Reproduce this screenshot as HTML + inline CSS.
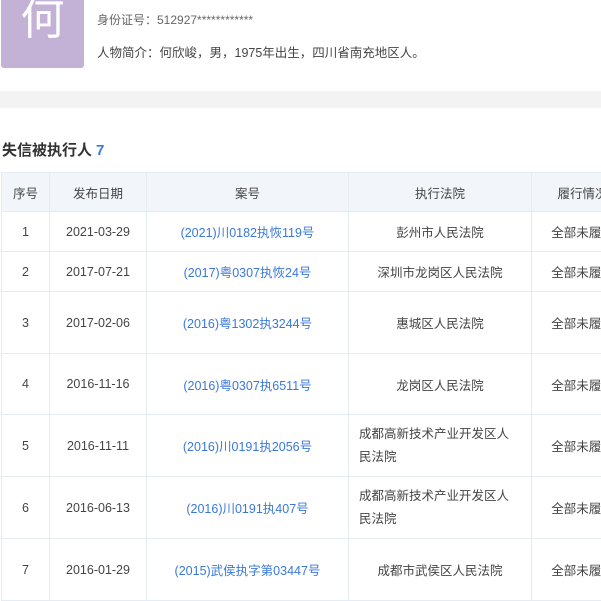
<!DOCTYPE html>
<html><head><meta charset="utf-8"><style>
body{margin:0;width:601px;height:601px;overflow:hidden;background:#fff;font-family:"Liberation Sans","Noto Sans CJK SC",sans-serif;color:#333}
.av{position:absolute;left:1px;top:-14px;width:83px;height:82px;background:#c4b2d6;border-radius:3px;color:#fff;font-size:44px;text-align:center;line-height:68px}
.l1{position:absolute;left:97px;top:11px;font-size:12px;color:#666}
.l2{position:absolute;left:97px;top:42px;font-size:12.5px;color:#444}
.band{position:absolute;left:0;top:91px;width:601px;height:17px;background:#f3f3f3}
.t{position:absolute;left:2px;top:139px;font-size:15px;font-weight:bold;color:#333}
.t span{color:#3a78d8;margin-left:4px}
table{position:absolute;left:1px;top:172px;border-collapse:collapse;font-size:12.5px;table-layout:fixed;width:632px}
td,th{border:1px solid #e5ecf4;text-align:center;color:#444;font-weight:normal;padding:0}
th{background:#f2f6fb;height:38px}
td a{color:#3a78d8;text-decoration:none}
.l{text-align:left;padding-left:10px;padding-right:22px;line-height:23px}
</style></head><body>
<div class="av">何</div>
<div class="l1">身份证号：512927************</div>
<div class="l2">人物简介：何欣峻，男，1975年出生，四川省南充地区人。</div>
<div class="band"></div>
<div class="t">失信被执行人<span>7</span></div>
<table>
<colgroup><col style="width:48px"><col style="width:97px"><col style="width:202px"><col style="width:183px"><col style="width:102px"></colgroup>
<tr><th>序号</th><th>发布日期</th><th>案号</th><th>执行法院</th><th>履行情况</th></tr>
<tr style="height:40px"><td>1</td><td>2021-03-29</td><td><a>(2021)川0182执恢119号</a></td><td>彭州市人民法院</td><td>全部未履行</td></tr>
<tr style="height:40px"><td>2</td><td>2017-07-21</td><td><a>(2017)粤0307执恢24号</a></td><td>深圳市龙岗区人民法院</td><td>全部未履行</td></tr>
<tr style="height:62px"><td>3</td><td>2017-02-06</td><td><a>(2016)粤1302执3244号</a></td><td>惠城区人民法院</td><td>全部未履行</td></tr>
<tr style="height:61px"><td>4</td><td>2016-11-16</td><td><a>(2016)粤0307执6511号</a></td><td>龙岗区人民法院</td><td>全部未履行</td></tr>
<tr style="height:62px"><td>5</td><td>2016-11-11</td><td><a>(2016)川0191执2056号</a></td><td class="l">成都高新技术产业开发区人民法院</td><td>全部未履行</td></tr>
<tr style="height:62px"><td>6</td><td>2016-06-13</td><td><a>(2016)川0191执407号</a></td><td class="l">成都高新技术产业开发区人民法院</td><td>全部未履行</td></tr>
<tr style="height:62px"><td>7</td><td>2016-01-29</td><td><a>(2015)武侯执字第03447号</a></td><td>成都市武侯区人民法院</td><td>全部未履行</td></tr>
</table>
</body></html>
